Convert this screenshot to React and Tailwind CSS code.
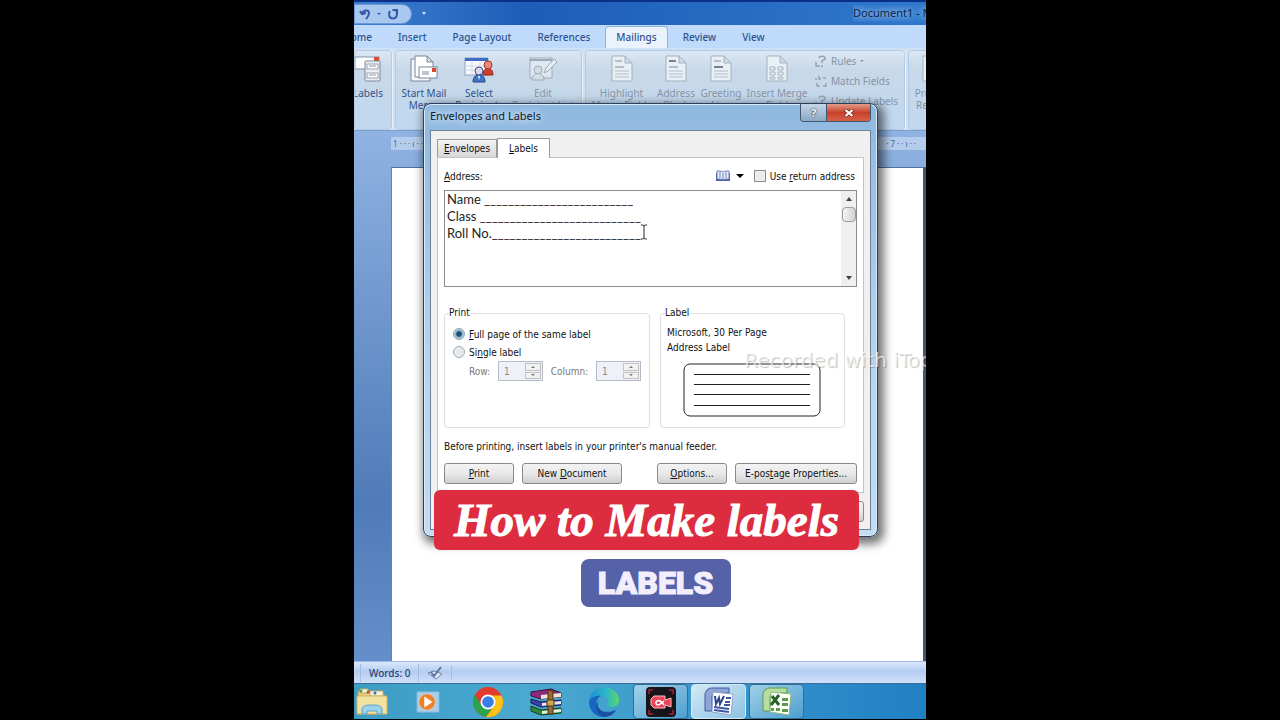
import clsx from 'clsx';

const TABS = ['Insert', 'Page Layout', 'References', 'Mailings', 'Review', 'View'];

const ADDRESS = [
    'Name _________________________',
    'Class ___________________________',
    'Roll No._________________________',
].join('\n');

/* ---------- Icons ---------- */

function UndoIcon() {
    return (
        <svg viewBox="0 0 12 12" className="h-3 w-3" fill="none" stroke="#3656a8" strokeWidth="2">
            <path d="M1 3l2 3 4-1" />
            <path d="M3 6C4 2 10 1 10 5c0 3-1 4-3 6" />
        </svg>
    );
}

function RedoIcon() {
    return (
        <svg viewBox="0 0 12 12" className="h-3 w-3" fill="none" stroke="#3656a8" strokeWidth="2">
            <path d="M3 3C1 6 2 10.5 6 10.5S11 6 9 2" />
            <path d="M5.5 2H10v4" />
        </svg>
    );
}

function LabelsIcon() {
    return (
        <svg viewBox="0 0 28 28" className="h-7 w-7">
            <rect x="1" y="2" width="24" height="12" fill="#fff" stroke="#8793a6" />
            <rect x="20" y="2" width="5" height="4" fill="#d9482f" />
            <rect x="11" y="6" width="15" height="20" rx="1" fill="#eef0f4" stroke="#7d8796" />
            <rect x="13" y="9" width="11" height="5" fill="#fff" stroke="#9aa2ae" />
            <rect x="13" y="18" width="11" height="5" fill="#fff" stroke="#9aa2ae" />
            <path d="M15 11h7M15 20h7" stroke="#8d95a3" />
        </svg>
    );
}

function StartMailIcon() {
    return (
        <svg viewBox="0 0 28 28" className="h-7 w-7">
            <path d="M1 4h14l5 5v17H1z" fill="#f4f6f9" stroke="#7b8798" />
            <path d="M5 1h12l6 6v15H5z" fill="#fff" stroke="#7b8798" />
            <path d="M17 1v6h6z" fill="#d5dde8" stroke="#7b8798" />
            <rect x="9" y="12" width="18" height="11" fill="#fff" stroke="#7b8798" />
            <rect x="22" y="13" width="4" height="4" fill="#d9482f" />
            <path d="M12 17h7M12 19h7" stroke="#7f8aa0" />
        </svg>
    );
}

function SelectIcon() {
    return (
        <svg viewBox="0 0 30 28" className="h-7 w-8">
            <rect x="1" y="3" width="23" height="17" fill="#f7f9fc" stroke="#8fa4c4" />
            <path d="M1 3h23v3H1z" fill="#3d6cc4" />
            <path d="M8 7v13M16 7v13M1 11h23M1 15h23" stroke="#cdd8e8" />
            <path d="M19 20c0-9 10-9 10 0z" fill="#d33c2b" stroke="#8f241a" />
            <circle cx="24" cy="10" r="4" fill="#e58a78" stroke="#a33226" />
            <path d="M9 27c0-10 12-10 12 0z" fill="#3f74cd" stroke="#234785" />
            <circle cx="15" cy="16" r="4" fill="#dfd6e2" stroke="#2d4f92" />
            <path d="M14 21l1 4 1-4z" fill="#fff" />
        </svg>
    );
}

function EditIcon() {
    return (
        <svg viewBox="0 0 28 28" className="h-7 w-7" fill="none" stroke="#9dabb9">
            <rect x="1" y="3" width="22" height="20" fill="#dfe8f0" />
            <path d="M1 5h22" strokeWidth="2" />
            <path d="M3 25c0-9 12-9 12 0z" fill="#d3dde6" />
            <circle cx="9" cy="15" r="4" fill="#d3dde6" />
            <path d="M15 18l2-5 8-9 3 3-9 9z" fill="#e6edf3" />
        </svg>
    );
}

function DocIcon({ grid, dark }) {
    return (
        <svg viewBox="0 0 24 28" className="h-7 w-6">
            <path d="M2 1h13l7 7v18H2z" fill="#e8eff5" stroke="#a4b1be" />
            <path d="M15 1v7h7z" fill="#cfdbe6" stroke="#a4b1be" />
            {grid ? (
                <path
                    d="M5 12h5v3H5zM13 12h5v3h-5zM5 17h5v3H5zM13 17h5v3h-5zM5 22h5v2H5zM13 22h5v2h-5z"
                    fill="none"
                    stroke="#a7b3bf"
                />
            ) : (
                <>
                    <path d="M5 6h7" stroke={dark === 'top' ? '#76828f' : '#b3bec9'} strokeWidth="2" />
                    <path d="M5 12h9" stroke={dark === 'mid' ? '#76828f' : '#b3bec9'} strokeWidth="2" />
                    <path d="M5 16h14M5 19h14M5 22h14" stroke="#b3bec9" />
                </>
            )}
        </svg>
    );
}

function RulesIcon() {
    return (
        <svg viewBox="0 0 12 12" className="h-3 w-3 shrink-0" fill="none" stroke="#93a2b1" strokeWidth="1.5">
            <path d="M1 7v4h4M4 3c1-3 7-2 6 1L7 6v2M7 10v2" />
        </svg>
    );
}

function MatchIcon() {
    return (
        <svg viewBox="0 0 12 12" className="h-3 w-3 shrink-0" fill="none" stroke="#93a2b1" strokeWidth="1.5">
            <path d="M1 5V3M4 1v3h2M8 3h3M2 8v3h3M8 11h3V8" />
        </svg>
    );
}

function BookIcon() {
    return (
        <svg viewBox="0 0 14 12" className="h-3 w-3.5">
            <path d="M0 3h14v8H0z" fill="#49619f" />
            <path d="M1 1c3 0 5 0 6 1 1-1 3-1 6-1v8c-3 0-5 0-6 1-1-1-3-1-6-1z" fill="#e9eefa" stroke="#6d82b8" />
            <path d="M7 3v7M3 3h2M3 5h2M3 7h2M9 3h2M9 5h2M9 7h2" stroke="#6d82b8" />
        </svg>
    );
}

function FolderIcon() {
    return (
        <svg viewBox="0 0 32 28" className="h-7 w-8">
            <path d="M2 3h10l2 3h14v20H2z" fill="#e8cd7c" stroke="#b99a4c" />
            <path d="M4 1h8v4H4zM14 3h13v5H14z" fill="#f7f3dc" stroke="#c3ac68" />
            <circle cx="5" cy="3" r="1.5" fill="#3fa252" />
            <circle cx="12" cy="4" r="1.5" fill="#cf4433" />
            <circle cx="19" cy="5" r="1.5" fill="#2f6fc0" />
            <path d="M1 8h30v18H1z" fill="#f3e3a2" stroke="#cfb262" />
            <path d="M6 26v-5c0-3 3-4 10-4s10 1 10 4v5h-5v-3H11v3z" fill="#9bd3ee" stroke="#5ba3cb" />
        </svg>
    );
}

function PlayerIcon() {
    return (
        <svg viewBox="0 0 26 24" className="h-6 w-6">
            <rect x="1" y="1" width="24" height="22" rx="1" fill="#a9cfe8" stroke="#7db2d4" />
            <circle cx="12" cy="12" r="9" fill="#ee8128" stroke="#c9cfd4" />
            <path d="M9 6v12l9-6z" fill="#fff" />
        </svg>
    );
}

function ChromeIcon() {
    return (
        <svg viewBox="0 0 32 32" className="h-8 w-8">
            <circle cx="16" cy="16" r="15" fill="#e33b2e" />
            <path d="M3 8.5A15 15 0 0 0 14 30.8L22.5 19.500 9.5 19.5z" fill="#2ba24c" />
            <path d="M14 31A15 15 0 0 0 29.5 9.5H16l6.5 10z" fill="#fbc116" />
            <circle cx="16" cy="16" r="7.5" fill="#fff" />
            <circle cx="16" cy="16" r="5.8" fill="#3b7de8" />
        </svg>
    );
}

function ArchiveIcon() {
    return (
        <svg viewBox="0 0 32 28" className="h-7 w-8">
            <path d="M1 4l20-3 10 4v4l-20 2-10-3z" fill="#8d2a7d" stroke="#3b1036" />
            <path d="M11 7l20-2v4l-20 2z" fill="#efe6d3" />
            <path d="M1 11l10 3 20-2v5l-20 2-10-4z" fill="#3844a8" stroke="#161a52" />
            <path d="M12 15l19-2v3l-19 2z" fill="#e5e4ee" />
            <path d="M1 18l10 4 20-2v5l-20 2-10-4z" fill="#2f8a3a" stroke="#123f19" />
            <path d="M12 23l19-2v3l-19 2z" fill="#dfeedd" />
            <path d="M18 2l5 1v23h-5z" fill="#9b6b35" stroke="#4c3216" />
            <rect x="17" y="12" width="7" height="6" rx="1" fill="#d0a64a" stroke="#4c3216" />
        </svg>
    );
}

function EdgeIcon() {
    return (
        <svg viewBox="0 0 32 32" className="h-8 w-8">
            <defs>
                <linearGradient id="edgeTop" x1="0" y1="0" x2="1" y2="0">
                    <stop offset="0" stopColor="#1d8fd6" />
                    <stop offset="0.6" stopColor="#2cb9c6" />
                    <stop offset="1" stopColor="#5fd660" />
                </linearGradient>
            </defs>
            <path d="M1 16C1 7 8 1 16 1s15 6 15 13c0 5-4 7-7 7-4 0-6-1-5-3 3-3 0-8-5-8C8 10 3 12 1 16z" fill="url(#edgeTop)" />
            <path d="M1 16c2-5 7-7 12-6-4 2-5 6-4 9 1 6 8 9 19 5-3 5-8 7-12 7C8 31 1 25 1 16z" fill="#1667bd" />
            <path d="M13 12c-5 4-4 12 3 14 4 1 9 0 12-2-3 5-8 7-12 7-8-2-10-13-3-19z" fill="#1b4f9f" />
        </svg>
    );
}

function RecorderIcon() {
    return (
        <svg viewBox="0 0 30 30" className="h-[30px] w-[30px]">
            <rect x="0" y="0" width="30" height="30" rx="4" fill="#17141a" />
            <path d="M3 7V3h4M23 3h4v4M3 23v4h4M23 27h4v-4" fill="none" stroke="#a02733" strokeWidth="1.5" />
            <path d="M8 9h11v4l6-2v9l-6-2v3H8l-3-3v-6z" fill="#ee4358" stroke="#f7c3c9" />
            <path d="M18 18c-2-3-5-5-7-4s-1 4 1 4 3-2 6-4" fill="none" stroke="#fff" strokeWidth="1.5" />
        </svg>
    );
}

function OfficeIcon({ excel }) {
    return (
        <svg viewBox="0 0 30 30" className="h-[30px] w-[30px]">
            <path
                d="M1 24V8c0-4 3-7 7-7h17v5H12c-3 0-4 2-4 4v14z"
                fill={excel ? '#b7dda3' : '#8fa5d8'}
                stroke={excel ? '#5f9e45' : '#3d5aa5'}
            />
            <path d="M9 5l20 2-2 21-19-3z" fill="#fff" stroke={excel ? '#8cba79' : '#93a3c9'} />
            {excel ? (
                <>
                    <path d="M10 9l7 9M17 8l-8 10" stroke="#2b6327" strokeWidth="3" />
                    <path d="M20 11h6v3h-6zM20 16h6v3h-6zM20 22h6v3h-6zM14 21h4v3h-4zM9 21h3v3H9z" fill="#5a9c49" />
                </>
            ) : (
                <>
                    <path d="M11 9l1 8 3-6 1 6 4-8" fill="none" stroke="#2c4790" strokeWidth="2" />
                    <path d="M22 11h5M21 15h5M20 18h6M10 20l15 2M10 23l15 2" stroke="#3c56a2" strokeWidth="2" />
                </>
            )}
        </svg>
    );
}

/* ---------- Ribbon ---------- */

function RibbonButton({ icon, lines, width, disabled }) {
    return (
        <button
            type="button"
            disabled={disabled}
            className={clsx(
                'flex shrink-0 flex-col items-center gap-1 pt-1 text-[10px] leading-3 whitespace-nowrap',
                disabled ? 'text-[#8595a6]' : 'text-[#33508a]',
                width
            )}
        >
            {icon}
            <span className="flex flex-col items-center">
                {lines.map((line) => (
                    <span key={line}>{line}</span>
                ))}
            </span>
        </button>
    );
}

function RibbonGroup({ className, children }) {
    return (
        <div
            className={clsx(
                'flex h-[80px] shrink-0 overflow-hidden rounded-sm border border-[#b3cbe4] bg-linear-to-b from-[#dbe7f3] via-[#c8d8e8] via-25% to-[#c0d8f0] shadow-[1px_0_0_#e8f1fb]',
                className
            )}
        >
            {children}
        </div>
    );
}

function WordWindow() {
    return (
        <div className="flex flex-1 flex-col">
            {/* Title bar */}
            <div className="flex h-[25px] items-center justify-between border-t-2 border-[#0b2f86] bg-linear-to-r from-[#3f7fcf] via-[#1d5db8] via-30% to-[#2f78cc]">
                <div className="flex items-center">
                    <div className="flex h-5 w-[58px] items-center gap-1.5 rounded-r-full border border-[#6b98d6] bg-[#a9c8f0] pl-1">
                        <button type="button" aria-label="Undo"><UndoIcon /></button>
                        <span className="border-x-2 border-t-2 border-x-transparent border-t-[#3656a8]" />
                        <button type="button" aria-label="Redo"><RedoIcon /></button>
                    </div>
                    <span className="ml-2.5 border-x-2 border-t-3 border-x-transparent border-t-[#cfe2fb]" />
                </div>
                <div className="w-[73px] overflow-hidden text-[11px] whitespace-nowrap text-[#0f2446] [text-shadow:0_0_6px_#b9d8fb,0_0_8px_#b9d8fb]">
                    Document1 - Microsoft Word
                </div>
            </div>

            {/* Tabs */}
            <nav className="flex h-[23px] items-end bg-[#bfdafb] text-[10px] leading-[21px] font-medium text-[#31528f]">
                <a href="#home" className="flex w-[31px] justify-end overflow-hidden pr-[13px]">Home</a>
                {TABS.map((tab) => (
                    <a
                        key={tab}
                        href={`#${tab}`}
                        className={clsx(
                            'whitespace-nowrap',
                            tab === 'Mailings'
                                ? 'mx-0.5 rounded-t border border-b-0 border-[#8fb2de] bg-[#eaf2fc] px-2.5'
                                : 'px-[13px]'
                        )}
                    >
                        {tab}
                    </a>
                ))}
            </nav>

            {/* Ribbon */}
            <div className="flex h-[83px] gap-[3px] overflow-hidden border-b border-[#7f9fc9] bg-[#cfe0f3] pt-0.5">
                <RibbonGroup className="w-[38px] justify-end pr-[7px]">
                    <RibbonButton icon={<LabelsIcon />} lines={['Labels']} width="w-8" />
                </RibbonGroup>
                <RibbonGroup className="w-[187px]">
                    <RibbonButton icon={<StartMailIcon />} lines={['Start Mail', 'Merge']} width="w-14" />
                    <RibbonButton icon={<SelectIcon />} lines={['Select', 'Recipients']} width="w-[54px]" />
                    <RibbonButton icon={<EditIcon />} lines={['Edit', 'Recipient List']} width="w-[74px]" disabled />
                </RibbonGroup>
                <RibbonGroup className="w-[320px]">
                    <RibbonButton icon={<DocIcon />} lines={['Highlight', 'Merge Fields']} width="w-[71px]" disabled />
                    <RibbonButton icon={<DocIcon dark="top" />} lines={['Address', 'Block']} width="w-[38px]" disabled />
                    <RibbonButton icon={<DocIcon dark="mid" />} lines={['Greeting', 'Line']} width="w-[52px]" disabled />
                    <RibbonButton icon={<DocIcon grid />} lines={['Insert Merge', 'Field']} width="w-[60px]" disabled />
                    <div className="flex flex-col pl-2 text-[10px] leading-5 whitespace-nowrap text-[#8595a6]">
                        <button type="button" disabled className="flex items-center gap-1">
                            <RulesIcon /> Rules
                            <span className="border-x-2 border-t-2 border-x-transparent border-t-[#8595a6]" />
                        </button>
                        <button type="button" disabled className="flex items-center gap-1"><MatchIcon /> Match Fields</button>
                        <button type="button" disabled className="flex items-center gap-1"><RulesIcon /> Update Labels</button>
                    </div>
                </RibbonGroup>
                <RibbonGroup className="w-20">
                    <RibbonButton icon={<DocIcon />} lines={['Preview', 'Results']} width="w-12" disabled />
                </RibbonGroup>
            </div>

            {/* Document area */}
            <div className="flex flex-1 flex-col bg-linear-to-b from-[#8fb3e2] via-[#4f7bb8] via-70% to-[#648fca] pt-1.5 pl-[37px]">
                <div className="flex h-[13px] justify-between bg-[#b5cdec] px-0.5 text-[8px] leading-[13px] text-[#48628c]">
                    <span>1 · · · ı · ·</span>
                    <span className="pr-2">· 7 · · ı · ·</span>
                </div>
                <div className="mt-[17px] flex-1 border-t border-r-3 border-l border-t-[#53719c] border-r-[#46566c] border-l-[#6284b5] bg-white" />
            </div>

            {/* Status bar */}
            <div className="flex h-[22px] items-center border-t border-[#9dbbe6] bg-linear-to-b from-[#dbe8fb] via-[#b4cdf1] via-45% to-[#cfe0fa] pl-1.5 text-[10px] font-medium text-[#2a406e]">
                <span className="border-r border-l border-l-[#a4bde3] border-r-[#a4bde3] px-2 leading-[18px]">Words: 0</span>
                <span className="border-r border-[#a4bde3] px-2">
                    <svg viewBox="0 0 16 14" className="h-3.5 w-4">
                        <path d="M1 7l6-2 8 3-6 5z" fill="#e4ecf8" stroke="#6c7fa6" />
                        <path d="M4 6l3 4 7-9" fill="none" stroke="#5d74a5" strokeWidth="2" />
                    </svg>
                </span>
            </div>
        </div>
    );
}

/* ---------- Dialog ---------- */

function PushButton({ children, width }) {
    return (
        <button
            type="button"
            className={clsx(
                'h-[21px] rounded-[3px] border border-[#8a8a8a] bg-linear-to-b from-[#f3f3f3] via-[#e9e9e9] to-[#cfcfcf] whitespace-nowrap',
                width
            )}
        >
            {children}
        </button>
    );
}

function Spinner({ id }) {
    return (
        <div className="flex h-5 w-[45px] border border-[#b3bbc6] bg-[#eef2f8] p-px">
            <input id={id} defaultValue="1" disabled className="w-full min-w-0 pl-1 text-[#8a8a8a]" />
            <div className="flex w-4 shrink-0 flex-col gap-px">
                <button type="button" disabled aria-label="Increase" className="flex flex-1 items-center justify-center border border-[#c2c2c2] bg-[#f1f1f1]">
                    <span className="border-x-2 border-b-2 border-x-transparent border-b-[#777]" />
                </button>
                <button type="button" disabled aria-label="Decrease" className="flex flex-1 items-center justify-center border border-[#c2c2c2] bg-[#f1f1f1]">
                    <span className="border-x-2 border-t-2 border-x-transparent border-t-[#777]" />
                </button>
            </div>
        </div>
    );
}

const RADIO =
    'h-3 w-3 appearance-none rounded-full border border-[#a3abb2] bg-[#e6eaee] checked:border-[#8fa9b9] checked:bg-[radial-gradient(circle,#1c4f70_0_2px,#a9cbdc_4px)]';

function EnvelopesDialog() {
    return (
        <section
            aria-label="Envelopes and Labels"
            className="absolute top-[103px] right-[48px] left-[69px] rounded-lg border border-[#27405f] bg-linear-to-b from-[#8fb8e0] via-[#b7d4ef] via-60% to-[#c3dbf3] px-1.5 pb-1.5 shadow-[0_0_0_1px_#d9ecfb_inset,3px_4px_10px_3px_rgba(0,0,0,0.55)]"
        >
            <header className="flex h-[26px] items-start justify-between">
                <h2 className="text-[11px] leading-6 text-[#0d1a2b] [text-shadow:0_0_6px_#dcecfb,0_0_8px_#dcecfb]">
                    Envelopes and Labels
                </h2>
                <div className="flex h-[18px] overflow-hidden rounded-b border border-t-0 border-[#41566f] text-[11px] leading-4 font-bold text-white">
                    <button type="button" aria-label="Help" className="w-[26px] border-r border-[#41566f] bg-linear-to-b from-[#c5d5e6] to-[#8ea8c4] [text-shadow:0_0_2px_#333,0_0_1px_#333]">
                        ?
                    </button>
                    <button type="button" aria-label="Close" className="flex w-[43px] items-center justify-center bg-linear-to-b from-[#e29a88] via-[#c7402a] via-50% to-[#d6604a]">
                        <svg viewBox="0 0 10 8" className="h-2 w-2.5">
                            <path d="M1 0.5l8 7M9 0.5l-8 7" stroke="#7b2a1e" strokeWidth="3.5" />
                            <path d="M1.5 1l7 6M8.5 1l-7 6" stroke="#fff" strokeWidth="2.2" />
                        </svg>
                    </button>
                </div>
            </header>

            <div className="border border-[#6d8299] bg-[#f0f0f0] px-1.5 pt-[7px] pb-[7px] font-['DejaVu_Sans_Condensed','DejaVu_Sans',sans-serif] text-[10px] text-[#111]">
                {/* Tabs */}
                <div className="flex items-end leading-4">
                    <button type="button" className="h-[18px] w-[60px] border border-b-0 border-[#9a9a9a] bg-linear-to-b from-[#f2f2f2] to-[#d8d8d8]">
                        <u>E</u>nvelopes
                    </button>
                    <button type="button" className="-mb-px h-5 w-[53px] border border-b-0 border-[#9a9a9a] bg-white">
                        <u>L</u>abels
                    </button>
                </div>

                <div className="border border-[#c4c4c4] bg-white pt-2 pr-1.5 pb-2 pl-1.5">
                    <div className="flex h-6 items-center justify-between pr-0.5 pb-1">
                        <label htmlFor="address"><u>A</u>ddress:</label>
                        <div className="flex items-center">
                            <button type="button" aria-label="Address book" className="flex items-center gap-1.5">
                                <BookIcon />
                                <span className="border-x-4 border-t-4 border-x-transparent border-t-black" />
                            </button>
                            <label className="ml-2.5 flex items-center gap-1">
                                <input type="checkbox" className="h-3 w-3 appearance-none border border-[#8b8b8b] bg-[#ececec]" />
                                <span>Use <u>r</u>eturn address</span>
                            </label>
                        </div>
                    </div>

                    <div className="flex h-[97px] border border-[#8c8c8c]">
                        <textarea
                            id="address"
                            defaultValue={ADDRESS}
                            className="min-w-0 flex-1 resize-none overflow-hidden px-0.5 font-[Lato,sans-serif] text-[13px] leading-[17px] whitespace-pre text-[#222]"
                        />
                        <div className="flex w-[15px] flex-col items-center bg-[#efefef] py-1.5">
                            <span className="border-x-3 border-b-4 border-x-transparent border-b-[#444]" />
                            <span className="mt-1.5 h-[15px] w-3.5 rounded-sm border border-[#9b9b9b] bg-linear-to-r from-[#f5f5f5] to-[#d2d2d2]" />
                            <span className="mt-auto border-x-3 border-t-4 border-x-transparent border-t-[#444]" />
                        </div>
                    </div>

                    <div className="mt-[18px] flex gap-2.5 pr-3">
                        <fieldset className="h-[123px] w-[206px] rounded-sm border border-[#e0e0e0] px-2">
                            <legend className="-ml-1 leading-4">Print</legend>
                            <label className="mt-1 flex h-[18px] items-center gap-1">
                                <input type="radio" name="print" defaultChecked className={RADIO} />
                                <span><u>F</u>ull page of the same label</span>
                            </label>
                            <label className="flex h-[18px] items-center gap-1">
                                <input type="radio" name="print" className={RADIO} />
                                <span>Si<u>n</u>gle label</span>
                            </label>
                            <div className="flex items-center justify-between pl-4 text-[#777]">
                                <label htmlFor="row">Row:</label>
                                <Spinner id="row" />
                                <label htmlFor="column">Column:</label>
                                <Spinner id="column" />
                            </div>
                        </fieldset>
                        <fieldset className="h-[123px] flex-1 rounded-sm border border-[#e0e0e0] px-1.5">
                            <legend className="-ml-0.5 leading-4">Label</legend>
                            <p className="mt-1 leading-[15px]">
                                Microsoft, 30 Per Page
                                <br />
                                Address Label
                            </p>
                            <svg viewBox="0 0 138 54" className="mt-2 ml-4 h-[54px] w-[138px]" fill="none" stroke="#222">
                                <rect x="1" y="1" width="136" height="52" rx="6" />
                                <path d="M11 11.5h116M11 21.5h116M11 31.5h116M11 42.5h116" />
                            </svg>
                        </fieldset>
                    </div>

                    <p className="mt-2.5 leading-[18px]">Before printing, insert labels in your printer's manual feeder.</p>
                    <div className="mt-[7px] flex justify-between">
                        <div className="flex gap-2">
                            <PushButton width="w-[70px]"><u>P</u>rint</PushButton>
                            <PushButton width="w-[100px]">New <u>D</u>ocument</PushButton>
                        </div>
                        <div className="flex gap-2">
                            <PushButton width="w-[70px]"><u>O</u>ptions...</PushButton>
                            <PushButton width="w-[122px]">E-pos<u>t</u>age Properties...</PushButton>
                        </div>
                    </div>
                </div>

                <div className="mt-2 flex justify-end">
                    <PushButton width="w-[70px]">Cancel</PushButton>
                </div>
            </div>
        </section>
    );
}

/* ---------- Taskbar ---------- */

function Taskbar() {
    return (
        <footer className="flex h-[37px] items-center overflow-hidden border-t border-b border-t-[#3b6f98] border-b-black bg-linear-to-r from-[#3b9cc4] via-[#4ba9d0] via-30% to-[#2080c4]">
            <button type="button" aria-label="File Explorer" className="flex w-[47px] shrink-0 pl-0.5"><FolderIcon /></button>
            <button type="button" aria-label="Media Player" className="flex w-[58px] shrink-0 justify-center pr-1"><PlayerIcon /></button>
            <button type="button" aria-label="Chrome" className="flex w-[58px] shrink-0 justify-center"><ChromeIcon /></button>
            <button type="button" aria-label="WinRAR" className="flex w-[58px] shrink-0 justify-center"><ArchiveIcon /></button>
            <button type="button" aria-label="Edge" className="flex w-[58px] shrink-0 justify-center"><EdgeIcon /></button>
            <div className="flex h-full gap-[3px]">
                <button type="button" aria-label="Screen Recorder" className="flex w-[55px] shrink-0 items-center justify-center rounded-sm border border-[#2d6f9c] bg-linear-to-br from-[#a3d2ea] to-[#4b9fcf]">
                    <RecorderIcon />
                </button>
                <button type="button" aria-label="Word" className="flex w-[55px] shrink-0 items-center justify-center rounded-sm border border-[#d3ebf8] bg-linear-to-br from-[#d3e9f5] to-[#8cc3e3]">
                    <OfficeIcon />
                </button>
                <button type="button" aria-label="Excel" className="flex w-[55px] shrink-0 items-center justify-center rounded-sm border border-[#2d6f9c] bg-linear-to-br from-[#9fcfe8] to-[#4b9fcf]">
                    <OfficeIcon excel />
                </button>
            </div>
        </footer>
    );
}

export default function App() {
    return (
        <main className="min-h-screen bg-black font-['Noto_Sans',sans-serif]">
            <div className="relative mx-auto flex min-h-screen w-full max-w-[572px] flex-col overflow-hidden">
                <WordWindow />
                <Taskbar />
                <EnvelopesDialog />

                {/* Text cursor */}
                <svg viewBox="0 0 8 16" className="absolute top-[224px] left-[286px] h-4 w-2" fill="none" stroke="#222">
                    <path d="M1 1c2 0 3 0 3 1.5v11C4 15 3 15 1 15M7 1C5 1 4 1 4 2.5M7 15c-2 0-3 0-3-1.5" />
                </svg>

                {/* Recorder watermark */}
                <p className="absolute top-[348px] left-[390px] font-['DejaVu_Sans',sans-serif] text-[20px] leading-6 whitespace-nowrap text-white/70 [text-shadow:1px_1px_1px_rgba(0,0,0,0.25)]">
                    Recorded with iTop
                </p>

                {/* Video captions */}
                <div className="absolute top-[490px] right-[67px] left-[80px] flex flex-col items-center gap-[9px]">
                    <h1 className="w-full rounded-md bg-[#dd2c40] text-center font-['Liberation_Serif',serif] text-[47px] leading-[60px] font-bold whitespace-nowrap text-white italic [-webkit-text-stroke:1px_white]">
                        How to Make labels
                    </h1>
                    <p className="ml-[18px] w-[150px] rounded-lg bg-[#5562a8] text-center font-[Roboto,sans-serif] text-[32px] leading-[48px] font-black text-[#f3eefb] [-webkit-text-stroke:1px_#f3eefb]">
                        LABELS
                    </p>
                </div>
            </div>
        </main>
    );
}
